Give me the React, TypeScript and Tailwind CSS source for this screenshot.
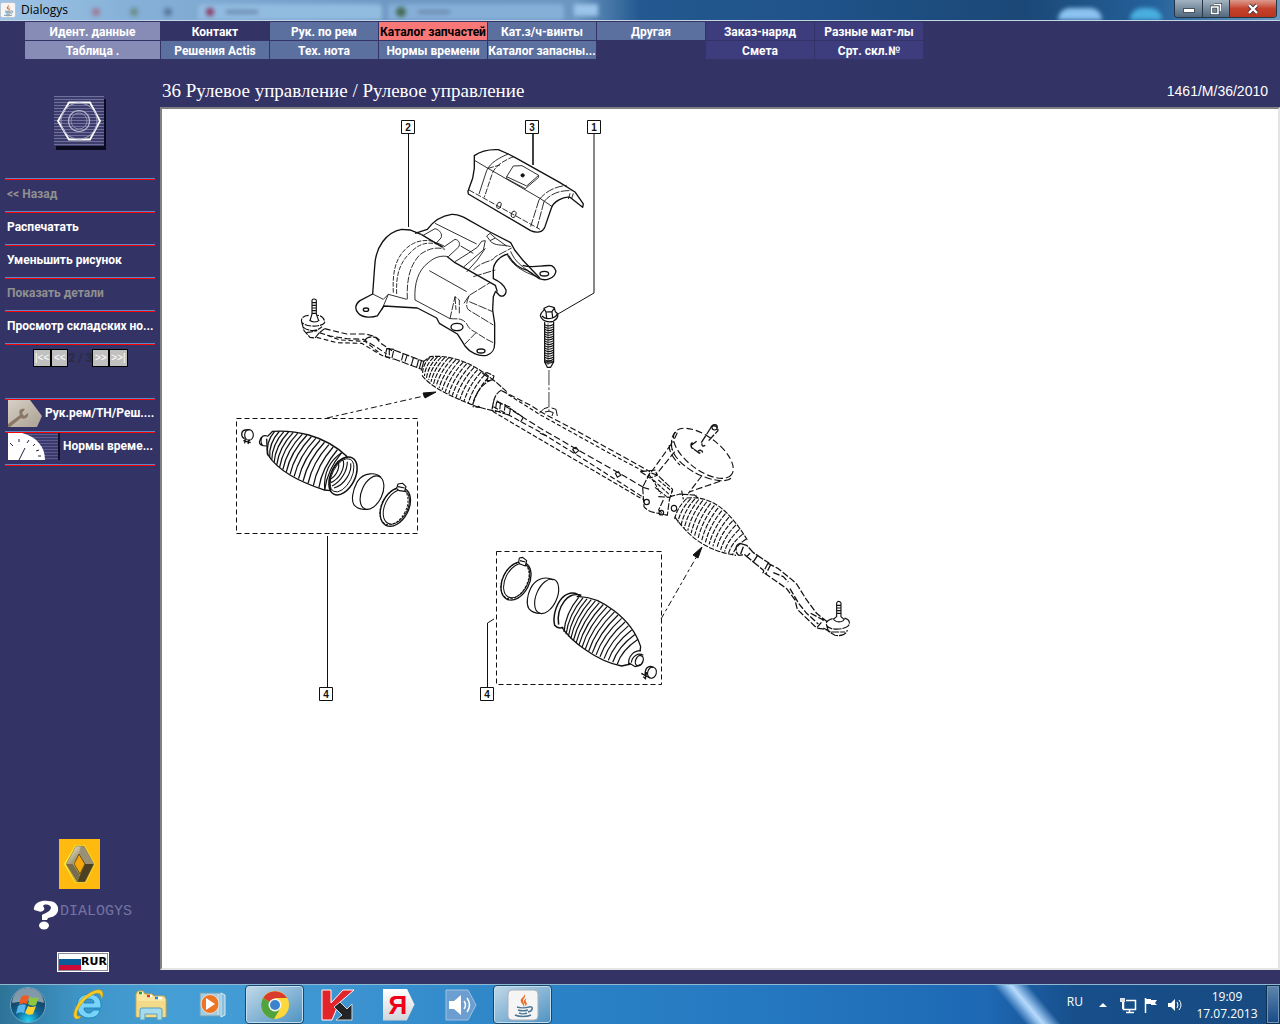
import type { ReactNode } from 'react';

type Pt = [number, number];

const quad = (a: Pt, b: Pt, c: Pt, t: number): Pt => [
  (1 - t) * (1 - t) * a[0] + 2 * t * (1 - t) * b[0] + t * t * c[0],
  (1 - t) * (1 - t) * a[1] + 2 * t * (1 - t) * b[1] + t * t * c[1],
];

/** Curved ribs spread between the upper and the lower edge of a bellows. */
function Ribs({ top, bottom, count, bulge, dash, width = 3 }: {
  top: [Pt, Pt, Pt]; bottom: [Pt, Pt, Pt]; count: number; bulge: number; dash?: string; width?: number;
}) {
  const d: string[] = [];
  for (let i = 0; i < count; i++) {
    const t = i / (count - 1);
    const p = quad(...top, t);
    const q = quad(...bottom, t);
    const cx = (p[0] + q[0]) / 2 - bulge;
    const cy = (p[1] + q[1]) / 2 - bulge * 0.2;
    d.push(`M${p[0].toFixed(1)} ${p[1].toFixed(1)}Q${cx.toFixed(1)} ${cy.toFixed(1)} ${q[0].toFixed(1)} ${q[1].toFixed(1)}`);
  }
  return <path d={d.join('')} strokeWidth={width} strokeDasharray={dash} />;
}

function Callout({ x, y, n }: { x: number; y: number; n: string }) {
  return (
    <g>
      <rect x={x - 6.5} y={y - 6.5} width="13" height="13" fill="#fff" stroke="#111" />
      <text x={x} y={y + 3.5} textAnchor="middle" fill="#111" stroke="none" fontSize="10" fontWeight="700" fontFamily="Liberation Sans, sans-serif">{n}</text>
    </g>
  );
}

function Shields() {
  return (
    <g transform="translate(340 110) scale(.3333)">
      {/* large heat shield */}
      <g strokeWidth="4">
        <path d="M245 374 L210 360 L185 358 C140 366 106 410 104 470 L98 552 L60 572 C44 584 44 598 55 610 C70 626 100 622 112 618 L132 588 L232 594 L290 624 L298 640 L352 672 L375 708 C390 728 415 740 440 736 C458 730 464 720 464 700 L464 640 L458 600 L460 560 L466 545" />
        <path d="M225 370 L262 358 C275 340 300 318 335 313 C352 312 362 318 372 322 L450 366 L512 398 L524 420 L548 450 L600 505" />
        <path d="M548 466 C580 476 605 464 635 467 C650 476 650 486 643 496 C634 508 615 513 598 506 L560 480 C535 475 520 462 505 436" />
        <path d="M505 432 C480 436 460 460 460 480 L460 506 C478 514 492 524 498 540 C500 556 488 562 478 556 L466 543" />
        <path d="M245 374 L308 412 M322 440 L345 458 L466 526 L472 545" />
        <ellipse cx="78" cy="599" rx="8" ry="5" /><ellipse cx="351" cy="651" rx="18" ry="11" /><ellipse cx="423" cy="723" rx="12" ry="6" /><ellipse cx="613" cy="491" rx="13" ry="7" />
      </g>
      <g strokeWidth="2.6">
        <path d="M98 552 L130 568 L145 553 L200 568 M145 553 L125 600" />
        <path d="M160 548 C158 500 160 450 200 414 C225 392 255 388 280 394 L308 410" strokeDasharray="14 4" />
        <path d="M170 552 C168 500 175 460 215 424 C240 400 262 396 290 402" strokeDasharray="14 4" />
        <path d="M202 568 C200 520 205 470 240 434 C265 415 290 410 315 418" strokeDasharray="20 4" />
        <path d="M225 570 C222 520 235 480 265 458 C285 440 305 436 325 440" />
        <path d="M268 482 L380 545 M225 570 L330 626 M250 376 L285 356 C300 360 308 372 303 384 L290 398 M285 340 L410 402 M310 412 L345 388 C358 390 362 402 355 412 L325 440 M362 408 L400 430" />
        <path d="M290 398 L312 408 M345 455 L385 430 L412 412 L425 394 L436 392 L430 420 L372 470 M436 415 L412 450 L380 486 M440 378 L450 370 L466 384 L450 392 Z M466 384 L500 408 M450 392 C465 410 485 402 512 410" />
        <path d="M330 626 L345 560 L358 570 L358 610 M345 560 L348 600 M330 626 C350 628 370 620 385 650 C395 664 405 664 408 668 L440 688 M408 668 L375 702 M440 688 L464 700" strokeDasharray="22 4" />
        <path d="M372 580 L388 556 L450 518 M388 556 C380 575 376 590 386 600 L460 645 M388 575 L458 605 M400 480 C430 450 455 458 466 440 L515 414 M400 500 L466 480" strokeDasharray="26 4" />
        <path d="M500 432 C515 460 535 480 590 500 M512 424 C525 455 545 470 580 492" />
      </g>
      {/* small heat shield */}
      <g strokeWidth="4">
        <path d="M403 137 C420 125 440 117 475 119 L505 132 L530 145 L660 218 L705 246 L730 282 L728 292 L690 262 C670 258 640 276 635 292 L615 350 C608 368 590 370 572 362 L385 252 L384 244 L398 205 L403 175 Z" />
      </g>
      <g strokeWidth="2.6">
        <path d="M405 152 L444 175 L600 265 L637 290 M505 132 C480 142 450 158 440 182 L417 252" />
        <path d="M522 140 C496 148 465 168 457 190 L433 262 M444 175 L480 165" strokeDasharray="18 4" />
        <path d="M597 270 C615 245 645 230 680 226 M612 275 C630 252 660 240 694 242 M597 270 L572 350 M612 275 L591 354" strokeDasharray="26 4" />
        <path d="M387 240 L600 358 M690 250 L685 268 M700 250 L695 266" strokeDasharray="18 5" />
        <path d="M500 200 L520 168 L546 167 L596 196 L560 228 Z M500 200 L500 206 L556 236 L596 202 V196" />
        <ellipse cx="477" cy="286" rx="6" ry="10" transform="rotate(20 477 286)" /><ellipse cx="521" cy="313" rx="7" ry="10" transform="rotate(20 521 313)" />
        <circle cx="548" cy="196" r="5" fill="#111" />
      </g>
      {/* bolt */}
      <g strokeWidth="3.6">
        <path d="M601 617 C602 606 612 602 612 600 L612 595 L627 588 L643 593 L646 605 C658 612 656 624 640 634 C625 638 606 634 601 617 Z M612 595 L618 606 L636 605 L643 594 M618 606 L620 624 M636 605 L638 622 M606 618 C615 630 645 628 652 612" />
        <path d="M614 636 L614 756 L622 772 L632 772 L641 756 L641 636 M614 756 L641 756" />
        <path d="M624 640 V765" strokeWidth="2" />
        {Array.from({ length: 17 }, (_, i) => <path key={i} d={`M614 ${644 + i * 7} Q628 ${652 + i * 7} 641 ${643 + i * 7}`} strokeWidth="3.4" />)}
      </g>
    </g>
  );
}

function LeftSide() {
  return (
    <g transform="translate(230 290) scale(.3333)">
      {/* ball joint and tie rod */}
      <g strokeWidth="3.4">
        <path d="M246 30 V72 L240 92 M259 30 V72 L266 92 M246 30 Q252 24 259 30 M246 38 h13 M246 46 h13 M246 54 h13 M246 62 h13 M246 70 h13 M238 90 C245 98 262 98 268 90" />
        <path d="M236 76 C220 76 212 86 215 96 C225 112 275 112 284 98 C284 86 275 76 262 76 M215 96 L222 122 L240 142 L255 144 L268 128 L284 116 M220 112 C235 124 260 126 276 110 M230 128 L262 122" strokeDasharray="20 3" />
        <path d="M284 116 L350 132 L408 132 L436 140 L452 160 L486 182 M268 128 L300 138 L350 146 L400 148 L440 172 L470 192" strokeDasharray="18 8" />
        <path d="M260 142 L320 158 L395 160 L425 178 L455 196 L490 208 M292 136 L330 150 L405 154 L445 186" strokeDasharray="14 8" />
        <path d="M405 150 C415 136 440 138 450 152 M470 176 L492 178 L486 204 L466 200 Z M478 174 V205 M492 180 L580 214 M490 206 L575 238 M520 190 L514 214 M532 194 L524 218 M550 204 L544 226" strokeDasharray="22 5" />
        <path d="M566 208 L560 232 M575 210 L568 236 M582 212 L574 242" />
      </g>
      {/* bellows in place */}
      <g strokeWidth="3.4">
        <Ribs top={[[600, 202], [690, 192], [775, 262]]} bottom={[[578, 252], [620, 300], [728, 346]]} count={17} bulge={12} dash="15 4" width={3.4} />
        <path d="M580 215 L600 200 C660 194 720 215 780 262 M576 256 C610 300 680 325 745 352" strokeDasharray="16 4" />
        <path d="M758 250 L775 262 L770 272 L788 270 L792 258 L772 248 Z M745 348 L750 352 L728 350 M790 268 C760 275 735 310 728 345 M780 262 L800 278 L830 305 M748 352 L800 365 M815 300 C795 310 790 330 786 362 M800 335 L842 352 L838 376 L796 362 Z M812 338 L808 368 M826 342 L822 372 M792 330 L786 358 M842 356 L880 382 L872 396" strokeDasharray="20 4" />
      </g>
      {/* mount under the bolt */}
      <path d="M928 370 L942 356 L955 352 M965 354 L978 358 L982 378 M945 366 Q958 360 970 368 L966 378" strokeWidth="3" />
      <path d="M957 240 V365" strokeWidth="2.4" strokeDasharray="46 6 8 6" />
      {/* boot kit */}
      <g strokeWidth="3.4">
        <path d="M112 440 L128 424 C190 420 280 432 352 500 M110 446 L112 492 C145 545 210 575 282 600 L304 602" strokeWidth="4" />
        <Ribs top={[[134, 424], [240, 420], [335, 488]]} bottom={[[114, 496], [150, 550], [284, 600]]} count={16} bulge={18} width={3.8} />
        <path d="M112 438 C102 434 90 440 88 456 C88 466 96 468 110 468 M98 438 C92 448 92 460 98 467" />
        <path d="M335 488 C300 510 280 550 284 600 M352 500 C310 510 292 560 302 602" />
        <ellipse cx="339" cy="558" rx="36" ry="61" transform="rotate(27 339 558)" strokeWidth="4.5" />
        <ellipse cx="336" cy="556" rx="29" ry="54" transform="rotate(27 336 556)" strokeWidth="2.6" />
        <path d="M352 515 C352 540 335 575 306 588 M340 512 C345 535 328 568 302 578 M362 520 C366 545 345 585 312 594 M325 518 C330 535 318 560 300 568" />
        <ellipse cx="426" cy="608" rx="31" ry="53" transform="rotate(24 426 608)" />
        <path d="M453 562 C440 548 402 544 382 575 C366 604 364 632 372 645 C382 656 398 660 412 658" />
        <ellipse cx="496" cy="651" rx="40" ry="62" transform="rotate(27 496 651)" strokeWidth="4" />
        <ellipse cx="499" cy="651" rx="34" ry="55" transform="rotate(27 499 651)" strokeWidth="3" />
        <ellipse cx="492" cy="650" rx="37" ry="58" transform="rotate(27 492 650)" strokeWidth="3" strokeDasharray="7 4" />
        <path d="M500 596 L504 582 L518 580 L528 590 L524 604 L508 602 Z M504 590 L524 594" fill="#fff" />
        <ellipse cx="57" cy="435" rx="13" ry="16" /><path d="M44 446 C32 442 32 422 46 420 L58 419 M40 452 L62 458 M46 446 L44 460 M58 448 L54 462" strokeWidth="4" />
      </g>
    </g>
  );
}

function RightSide() {
  return (
    <g transform="translate(540 400) scale(.3333)">
      {/* rack tube */}
      <g strokeWidth="3.4">
        <path d="M-115 -28 L-30 15 L10 40 L120 98 L330 215" strokeDasharray="18 8" />
        <path d="M-95 -16 L0 44 L200 155 L318 218" strokeDasharray="12 7" />
        <path d="M-130 2 L0 84 L100 142 L230 215 L310 262" strokeDasharray="20 9" />
        <path d="M-140 20 L0 96 L100 158 L310 292" strokeDasharray="16 8" />
        <path d="M-142 34 L0 118 L120 188 L308 298" strokeDasharray="14 6" />
        <path d="M98 148 L108 142 L116 152 L106 160 Z M226 220 L236 215 L242 226 L232 232 Z M0 100 L20 108" />
        {/* gear housing */}
        <path d="M330 218 L308 262 L312 320 C325 338 350 338 382 346 L388 300 L398 268 L352 225 Z M308 262 L330 268 M355 290 L390 292 M370 300 L356 330 L372 344 M302 215 L345 210 L352 226 L330 234 Z" strokeDasharray="20 5" />
        <circle cx="320" cy="306" r="8" /><ellipse cx="402" cy="325" rx="8" ry="9" /><circle cx="364" cy="338" r="7" />
        <path d="M340 240 L395 290 M355 240 L398 276 M345 262 L380 290 M326 222 L346 252 L362 282" strokeDasharray="12 5" />
        {/* steering input */}
        <ellipse cx="490" cy="160" rx="106" ry="50" transform="rotate(37 490 160)" strokeDasharray="20 9" />
        <path d="M394 130 C392 180 470 235 540 242 C560 243 575 238 576 228 M388 135 C386 155 400 175 420 195" strokeDasharray="22 8" />
        <path d="M408 96 C396 104 392 120 396 150 M394 132 L334 216 M404 155 L350 222 M540 244 L450 275 M485 228 L445 280 M412 98 L398 128" strokeDasharray="20 8" />
        <path d="M484 128 L512 84 M506 122 L534 92 M512 84 C514 74 534 74 534 92 M486 130 Q484 142 496 136 M458 128 C450 130 452 146 462 146 M462 148 L478 160 L488 152 M454 136 L470 124 M474 154 Q484 146 488 158" strokeDasharray="24 5" strokeWidth="4" />
        <circle cx="524" cy="82" r="8" />
        {/* bellows in place */}
        <Ribs top={[[440, 296], [540, 290], [618, 418]]} bottom={[[404, 358], [480, 430], [578, 464]]} count={17} bulge={12} dash="15 4" width={3.4} />
        <path d="M440 294 C520 286 570 336 622 420 M404 350 C460 430 520 455 588 466 M390 290 L420 282 L470 286 M425 272 L430 298 M462 284 L474 294" strokeDasharray="16 4" />
        {/* tie rod */}
        <path d="M600 430 C586 434 584 458 596 466 L616 464 M600 430 L620 436 L640 458 L688 490 M610 440 L602 462 M614 464 L640 486 L672 512 M630 460 L620 470 M652 468 L640 486" strokeWidth="4" strokeDasharray="26 4" />
        <path d="M684 490 L668 520 M692 494 L678 522 M684 490 L715 506 L752 536 L770 552 L800 600 L830 640 L865 668 M674 520 L712 546 L740 566 L765 600 L772 628 L830 684 L865 690 M700 518 L730 530 L745 546 M750 566 L776 610 L800 640 L835 672 M812 640 L850 660 L830 684" strokeDasharray="20 6" strokeWidth="3.8" />
        {/* ball joint */}
        <path d="M890 608 V650 L880 658 M903 608 V650 L912 658 M890 608 Q896 600 903 608 M890 616 h13 M890 624 h13 M890 632 h13 M890 640 h13 M880 656 C885 668 908 670 914 656" />
        <path d="M878 656 C850 664 856 680 875 686 C900 690 925 684 928 672 C930 662 922 656 912 654 M860 676 L865 694 L885 706 C905 710 920 702 922 690 M850 684 L872 696 L915 696" strokeDasharray="24 3" />
      </g>
    </g>
  );
}

function LowerKit() {
  return (
    <g transform="translate(480 530) scale(.3333)" strokeWidth="3.4">
      <ellipse cx="108" cy="153" rx="40" ry="61" transform="rotate(27 108 153)" strokeWidth="4" />
      <ellipse cx="110" cy="152" rx="34" ry="55" transform="rotate(27 110 152)" strokeWidth="3" />
      <ellipse cx="105" cy="152" rx="37" ry="58" transform="rotate(27 105 152)" strokeWidth="3" strokeDasharray="7 4" />
      <path d="M116 96 L118 84 L128 82 L140 92 L136 108 L120 102 Z M120 92 L136 96" fill="#fff" />
      <ellipse cx="200" cy="199" rx="31" ry="55" transform="rotate(24 200 199)" />
      <path d="M220 150 C195 136 165 148 152 175 C142 195 138 220 146 235 C154 246 170 250 182 250" />
      <path d="M300 200 C290 186 268 184 248 202 C226 226 218 262 224 286 C232 296 244 294 250 292 M304 196 C285 190 268 196 254 212 C236 236 232 262 236 284" strokeWidth="4.5" />
      <path d="M290 200 C360 196 456 266 482 350 L480 364 M246 292 C270 330 350 395 425 408 L452 402" strokeWidth="4" />
      <Ribs top={[[296, 202], [400, 210], [474, 328]]} bottom={[[252, 306], [300, 360], [412, 402]]} count={17} bulge={18} width={3.6} />
      <path d="M482 362 C460 362 444 380 446 402 M490 376 C474 366 456 380 454 398 M446 398 L466 410 L482 404" />
      <ellipse cx="478" cy="392" rx="11" ry="16" transform="rotate(24 478 392)" strokeWidth="4" />
      <ellipse cx="516" cy="428" rx="13" ry="17" transform="rotate(15 516 428)" />
      <path d="M520 412 C504 404 494 416 496 436 M484 430 L510 444 M490 440 L498 448 M500 426 L496 444" strokeWidth="4" />
    </g>
  );
}

function PartsDrawing() {
  return (
    <svg width="700" height="600" viewBox="162 109 700 600" fill="none" stroke="#111" strokeLinecap="butt" strokeLinejoin="round" role="img" aria-label="Рулевое управление" className="block max-w-full">
      <path d="M408.500 133 V227 M594 133 V293 L558 314" strokeWidth="1" />
      <path d="M533 133 V165" strokeWidth="1.600" />
      <path d="M327.500 536 V688 M487.500 688 V623 L494 619" strokeWidth="1" />
      <g strokeDasharray="5 3" strokeWidth="1">
        <rect x="236.500" y="418.500" width="181" height="115" />
        <rect x="496.500" y="551.500" width="165" height="133" />
      </g>
      <path d="M327 418 L424 396 M661 619 L697 556" strokeDasharray="6 3 3 3" />
      <path d="M436 392 L423 393 L425 398 Z M702 547 L693 555 L698 558 Z" fill="#111" />
      <Shields />
      <LeftSide />
      <RightSide />
      <LowerKit />
      <Callout x={408} y={127} n="2" />
      <Callout x={532} y={127} n="3" />
      <Callout x={594} y={127} n="1" />
      <Callout x={326} y={694} n="4" />
      <Callout x={487} y={694} n="4" />
    </svg>
  );
}

const JavaCup = ({ className }: { className: string }) => (
  <svg viewBox="0 0 32 32" className={className} aria-hidden="true">
    <rect x="1" y="1" width="30" height="30" rx="4" fill="#f5f5f6" stroke="#a9b0b8" />
    <path d="M17 4c3 3-5 5-3 9 1 2 3 3 2 5 3-3 0-4 0-6 0-3 4-4 1-8zM20 9c-4 2-4 4-2 6 1 1 0 2-1 3 4-2 3-4 2-5-1-2 0-3 1-4z" fill="#e8702a" />
    <path d="M10 18c3 1 9 1 12 0M11 21c3 1 7 1 10 0M12 24c2 1 6 1 8 0M8 26c4 2 12 2 16 0M22 18c5-1 4 4-1 5" fill="none" stroke="#4d7896" strokeWidth="1.500" />
  </svg>
);

const menu: { label: string; tone: string }[][] = [
  [
    { label: 'Идент. данные', tone: 'bg-[#868cb6] text-white' },
    { label: 'Контакт', tone: 'bg-[#333366] text-white' },
    { label: 'Рук. по рем', tone: 'bg-[#5c70a0] text-white' },
    { label: 'Каталог запчастей', tone: 'bg-[#f87878] text-black' },
    { label: 'Кат.з/ч-винты', tone: 'bg-[#5c70a0] text-white' },
    { label: 'Другая', tone: 'bg-[#5c70a0] text-white' },
    { label: 'Заказ-наряд', tone: 'bg-[#3d3d7d] text-white' },
    { label: 'Разные мат-лы', tone: 'bg-[#3d3d7d] text-white' },
  ],
  [
    { label: 'Таблица .', tone: 'bg-[#868cb6] text-white' },
    { label: 'Решения Actis', tone: 'bg-[#5c70a0] text-white' },
    { label: 'Тех. нота', tone: 'bg-[#5c70a0] text-white' },
    { label: 'Нормы времени', tone: 'bg-[#5c70a0] text-white' },
    { label: 'Каталог запасны...', tone: 'bg-[#5c70a0] text-white' },
    { label: '', tone: '' },
    { label: 'Смета', tone: 'bg-[#3d3d7d] text-white' },
    { label: 'Срт. скл.№', tone: 'bg-[#3d3d7d] text-white' },
  ],
];

const actions = [
  { label: '<< Назад', disabled: true },
  { label: 'Распечатать', disabled: false },
  { label: 'Уменьшить рисунок', disabled: false },
  { label: 'Показать детали', disabled: true },
  { label: 'Просмотр складских но...', disabled: false },
];

function Rule() {
  return <div className="h-0.5 border-t border-[#5f86c4] bg-[#ff0000]" />;
}

function PagerButton({ children }: { children: string }) {
  return <button type="button" className="h-[18px] min-w-[17px] border border-black bg-[#c0c0c0] px-px font-['Liberation_Sans',sans-serif] text-[10px] leading-4 font-normal text-white">{children}</button>;
}

function Sidebar() {
  return (
    <aside className="flex w-40 shrink-0 flex-col px-[5px] pb-3">
      <svg viewBox="0 0 52 54" className="mt-[37px] ml-[49px] h-[54px] w-[52px]" aria-hidden="true">
        <rect x="2" y="3" width="50" height="51" fill="#0b0b20" />
        <rect width="50" height="50" fill="#3d3d6c" />
        <path d={Array.from({ length: 17 }, (_, i) => `M0 ${i * 3 + 0.5}H50`).join('')} stroke="#70709e" />
        <path d="M15 6.500H36L46 25L36 43.500H15L4 25Z" fill="none" stroke="#fff" strokeWidth="1.800" />
        <circle cx="25" cy="25" r="18" fill="none" stroke="#a0a0c0" />
        <circle cx="25" cy="25" r="10.500" fill="none" stroke="#b4b4cc" strokeWidth="1.200" />
        <circle cx="25" cy="25" r="8" fill="none" stroke="#8c8cb0" />
      </svg>
      <nav className="mt-7" aria-label="Действия">
        {actions.map((a) => (
          <div key={a.label}>
            <Rule />
            <button type="button" disabled={a.disabled} className={a.disabled ? 'flex h-[31px] w-full items-center px-0.5 pb-1 text-left whitespace-nowrap text-[#909090]' : 'flex h-[31px] w-full items-center px-0.5 pb-1 text-left whitespace-nowrap text-white'}>{a.label}</button>
          </div>
        ))}
        <Rule />
      </nav>
      <div className="mt-1 ml-7 flex h-[18px] items-center text-[#2b2b3d]">
        <PagerButton>{'|<<'}</PagerButton>
        <PagerButton>{'<<'}</PagerButton>
        <span className="w-6 text-center whitespace-nowrap">2 / 3</span>
        <PagerButton>{'>>'}</PagerButton>
        <PagerButton>{'>>|'}</PagerButton>
      </div>
      <nav className="mt-[31px]" aria-label="Документы">
        <Rule />
        <button type="button" className="flex h-[31px] w-full items-start gap-[3px] pl-[3px] text-white">
          <svg viewBox="0 0 34 27" className="h-[27px] w-[34px] shrink-0" aria-hidden="true">
            <defs><linearGradient id="paper" x2="1" y2="1"><stop stopColor="#d8d0c6" /><stop offset="1" stopColor="#aaa093" /></linearGradient></defs>
            <path d="M0 0H22L34 16L29 27H0Z" fill="url(#paper)" />
            <path d="M0 24L12 15C10 10 13 8 17 9L14 13L16 16L20 13C21 17 17 20 13 18L2 27H0Z" fill="#8a7766" />
          </svg>
          <span className="pt-1 whitespace-nowrap">Рук.рем/ТН/Реш....</span>
        </button>
        <Rule />
        <button type="button" className="flex h-[31px] w-full items-start gap-[3px] pl-[3px] text-white">
          <svg viewBox="0 0 52 27" className="h-[27px] w-[52px] shrink-0" aria-hidden="true">
            <rect width="52" height="27" fill="#11112d" /><rect width="50" height="27" fill="#3a3a6c" />
            <path d="M0 1.500H50M0 4.500H50M0 7.500H50M0 10.500H50M0 13.500H50M0 16.500H50M0 19.500H50M0 22.500H50M0 25.500H50" stroke="#5c5c90" />
            <path d="M0 0H14C29 4 37 14 37 27H0Z" fill="#fff" />
            <path d="M17 15L11 27M2 10L5 13M11 6V9M21 7L19 10M27 11L25 13M31 17L28 18M33 23H30" stroke="#22223c" />
          </svg>
          <span className="pt-1 whitespace-nowrap">Нормы време...</span>
        </button>
        <Rule />
      </nav>
      <div className="mt-auto flex flex-col">
        <svg viewBox="0 0 41 50" className="ml-[54px] h-[50px] w-[41px]" aria-label="Renault" role="img">
          <defs><linearGradient id="steel" x2="1" y2="1"><stop stopColor="#fffbe8" /><stop offset=".5" stopColor="#b8ae90" /><stop offset="1" stopColor="#6a5c3a" /></linearGradient></defs>
          <rect width="41" height="50" fill="#ffba10" />
          <path d="M17 7H25L35 25L26 43H17L6 25Z" fill="#fff03a" stroke="#fff03a" strokeWidth="2" />
          <path d="M17 7H25L21 14L14 25H7Z" fill="url(#steel)" />
          <path d="M25 7L35 25H26L20 14L22 7Z" fill="#9a9078" />
          <path d="M7 25H14L21 36L18 43Z" fill="#786c50" />
          <path d="M35 25H26L21 36L18 43H26Z" fill="#4c4022" />
          <path d="M20 15L26 25L21 35L15 25Z" fill="#f7a60c" stroke="#3b2f12" strokeWidth=".800" />
          <path d="M17 7H25L35 25L26 43H17L7 25Z" fill="none" stroke="#8a7430" strokeWidth=".600" />
        </svg>
        <div className="mt-[11px] flex w-full items-start pl-7 text-[#7474a2]">
          <svg viewBox="0 0 26 30" className="h-[30px] w-[26px] shrink-0" aria-hidden="true">
            <path d="M1 8C2 2 9 0 15 1C23 1 26 6 25 11C23 17 18 17 15 18L14 20H9V15C12 13 17 12 18 8C18 5 12 3 10 6C14 10 8 13 5 11C2 10 0 10 1 8Z" fill="#fff" />
            <ellipse cx="11" cy="25.500" rx="5" ry="4" fill="#fff" />
          </svg>
          <span className="ml-px pt-0.5 font-['Liberation_Mono',monospace] text-[15px] leading-5 font-normal">DIALOGYS</span>
        </div>
        <button type="button" className="mt-[22px] ml-[52px] flex h-5 w-[52px] items-center border border-white bg-white font-['DejaVu_Sans',sans-serif] text-[11px] font-bold text-black outline-1 -outline-offset-2 outline-[#8c8c98]">
          <span className="ml-px h-4 w-[22px] shrink-0 bg-[linear-gradient(#fff_0_33%,#0b5c98_33%_67%,#cc0c36_67%)]" />
          RUR
        </button>
      </div>
    </aside>
  );
}

function TaskButton({ label, active, children }: { label: string; active?: boolean; children: ReactNode }) {
  return (
    <button type="button" aria-label={label} className={active ? 'flex h-[39px] w-[59px] items-center justify-center rounded-sm border border-[#15486f] bg-linear-to-br from-[#c2d9e8] to-[#4b93c2] shadow-[inset_0_0_0_1px_#c4deef]' : 'flex h-[39px] w-[59px] items-center justify-center'}>
      {children}
    </button>
  );
}

function Taskbar() {
  return (
    <footer className="flex h-10 items-center border-t border-[#8db8d0] bg-[linear-gradient(90deg,#2d7397_0,#3f94c6_6%,#459fd6_14%,#3c93d0_28%,#2c83c6_42%,#2478c0_60%,#1e68b4_77%,#174f8b_84%,#174a80_100%)] font-normal text-white">
      <TaskButton label="Пуск">
        <svg viewBox="0 0 38 38" className="mr-1 h-[38px] w-[38px]">
          <defs><radialGradient id="orb" cx=".5" cy=".95" r=".8"><stop stopColor="#25d4f5" /><stop offset=".45" stopColor="#126594" /><stop offset="1" stopColor="#153851" /></radialGradient></defs>
          <circle cx="19" cy="19" r="17.500" fill="url(#orb)" stroke="#70a6c0" />
          <path d="M3 17C4-3 34-3 35 17C24 13 14 15 3 17Z" fill="#c9d9e2" opacity=".6" />
          <g transform="translate(2)"><path d="M10 11Q14 8 18 10L16 18Q12 16 8 19Z" fill="#ee5a24" /><path d="M19 11Q23 13 28 11L25 19Q21 21 17 18Z" fill="#8dc63f" /><path d="M7 20Q11 17 15 19L13 27Q9 25 5 28Z" fill="#59b7ef" /><path d="M17 20Q20 22 25 20L22 28Q18 30 14 27Z" fill="#ffd231" /></g>
        </svg>
      </TaskButton>
      <div className="flex flex-1 items-center gap-[3px]">
        <TaskButton label="Internet Explorer">
          <svg viewBox="0 0 34 34" className="h-[34px] w-[34px]">
            <path d="M17 6C9 6 5 11 5 18C5 25 10 30 17 30C23 30 27 27 28 22H21C20 24 19 25 17 25C14 25 12 23 12 20H29C30 11 25 6 17 6ZM12 15C13 12 14 11 17 11C20 11 22 12 22 15Z" fill="#79d3f8" stroke="#168ac3" fillRule="evenodd" />
            <path d="M5 31C-2 31 3 16 12 9C21 1 31-1 31 6C31 8 30 10 29 11C30 6 27 3 20 7C11 12 4 22 5 27C5 29 7 28 9 28C8 30 7 31 5 31Z" fill="#f7cb25" stroke="#b98a12" strokeWidth=".500" />
          </svg>
        </TaskButton>
        <TaskButton label="Проводник">
          <svg viewBox="0 0 34 32" className="h-8 w-[34px]">
            <path d="M2 28V5L4 2H9L11 5H18L20 7H30L32 10V28Z" fill="#f8e6a0" stroke="#c6a34b" />
            <path d="M5 4H9M13 7H18M21 9H28" stroke="#fff" strokeWidth="2.500" />
            <path d="M5 4H8" stroke="#27a127" strokeWidth="2.500" /><path d="M13 7H16" stroke="#d63c20" strokeWidth="2.500" /><path d="M21 9H24" stroke="#2287e0" strokeWidth="2.500" />
            <path d="M3 12H31V28H3Z" fill="#f3da88" />
            <path d="M6 31V21Q6 19 8 19H26Q28 19 28 21V31H23V25H11V31Z" fill="#a5dbee" stroke="#579fc0" />
          </svg>
        </TaskButton>
        <TaskButton label="Проигрыватель">
          <svg viewBox="0 0 28 28" className="h-7 w-7"><path d="M1 2H22V25H1Z" fill="#a5cbdd" stroke="#6ba2bd" /><path d="M22 2L26 4V24L22 26ZM19 3V24" fill="#8bc0dc" stroke="#d2edf8" /><ellipse cx="11" cy="13" rx="9" ry="9.500" fill="#ee7523" stroke="#dce6ea" /><path d="M7 7L16 13L7 19Z" fill="#fff" /></svg>
        </TaskButton>
        <TaskButton label="Google Chrome" active>
          <svg viewBox="0 0 30 30" className="h-[30px] w-[30px]"><circle cx="15" cy="15" r="14" fill="#ffd93c" /><path d="M15 15L3 8A14 14 0 0 1 27 8H15Z" fill="#d93b2c" /><path d="M15 15L3 8A14 14 0 0 0 14 29L20 19Z" fill="#51a43d" /><circle cx="15" cy="15" r="6.500" fill="#f4f4f4" /><circle cx="15" cy="15" r="5" fill="#3c83cc" /></svg>
        </TaskButton>
        <TaskButton label="Kaspersky">
          <svg viewBox="0 0 34 34" className="h-[34px] w-[34px]"><path d="M2 2H11V15L23 2H34L19 15L12 32H2Z" fill="#e2252b" stroke="#fff" /><path d="M14 19L20 14L27 21L32 16V32H16L22 27Z" fill="#242426" stroke="#d5d5d5" /></svg>
        </TaskButton>
        <TaskButton label="Яндекс">
          <span className="flex h-8 w-8 items-center justify-start bg-linear-to-b from-white to-[#d0d4d8] pl-1.5 font-['Liberation_Sans',sans-serif] text-[26px] leading-none font-bold text-[#f00018] [clip-path:polygon(0_0,76%_0,100%_50%,76%_100%,0_100%)]">Я</span>
        </TaskButton>
        <TaskButton label="Громкость">
          <svg viewBox="0 0 32 32" className="h-8 w-8"><path d="M1 1H23L31 16L23 31H1Z" fill="#6c9ed1" stroke="#9ec1e1" /><path d="M4 12H9L16 6V26L9 20H4Z" fill="#fff" /><path d="M19 12Q22 16 19 20M22 9Q27 16 22 23" fill="none" stroke="#fff" strokeWidth="1.500" /></svg>
        </TaskButton>
        <TaskButton label="Dialogys" active><JavaCup className="h-8 w-8" /></TaskButton>
      </div>
      <div className="h-full w-20 bg-[linear-gradient(50deg,transparent_34%,#93c2ef_46%,#b8dafa_50%,#8dbae8_54%,transparent_66%)]" />
      <div className="flex h-full items-center font-['Open_Sans','Noto_Sans',sans-serif] text-[12px]">
        <span className="mr-4 -mt-1.5">RU</span>
        <svg viewBox="0 0 88 20" className="h-5 w-[88px]" aria-hidden="true">
          <path d="M0 12L4 8L8 12Z" fill="#fff" />
          <path d="M24.500 7V14.500H36.500V5.500H27M30.500 14V17.500M27 17.500H35" fill="none" stroke="#fff" strokeWidth="1.500" /><path d="M21 3H26V7H21Z" fill="#d9e3ed" /><path d="M23.500 7V14" stroke="#fff" />
          <path d="M46.500 3V18" stroke="#fff" strokeWidth="1.500" /><path d="M47 4H52V5H58L56 8L58 10H52V9H47Z" fill="#fff" />
          <path d="M69 8H72L76 4V16L72 12H69Z" fill="#fff" /><path d="M78 7Q80 10 78 13M80 5Q84 10 80 15" fill="none" stroke="#fff" />
        </svg>
        <div className="mr-[7px] ml-2 w-16 text-center leading-[17px]"><div>19:09</div><div>17.07.2013</div></div>
        <button type="button" aria-label="Показать рабочий стол" className="h-full w-3.5 border border-[#0e2e52] bg-linear-to-b from-[#5f86ac] to-[#174a86] shadow-[inset_0_0_0_1px_#6e94ba]" />
      </div>
    </footer>
  );
}

export default function App() {
  return (
    <div className="flex min-h-screen flex-col bg-[#333366] font-['Roboto','Liberation_Sans',sans-serif] text-[12px] font-bold">
      <header className="flex h-[21px] items-center overflow-hidden border-b border-[#c3d4e2] bg-[linear-gradient(90deg,#9fc4e6_0,#86b1d8_10%,#6f99c4_30%,#6c96c0_45%,#235990_50%,#1f5288_65%,#1b4876_80%,#24619a_90%,#6c99c0_100%)] font-['Open_Sans','Noto_Sans',sans-serif] font-normal text-black">
        <JavaCup className="h-4 w-4" />
        <h1 className="ml-[5px]">Dialogys</h1>
        <div className="flex flex-1 items-end gap-1.5 self-end pl-6 blur-[2px]" aria-hidden="true">
          <i className="mb-1 h-2 w-2 rounded-full bg-[#a07a96]" /><i className="mr-5 mb-1 ml-6 h-2 w-2 rounded-full bg-[#6c8c86]" /><i className="mr-5 mb-1 h-2 w-2 rounded-full bg-[#56769c]" />
          <span className="flex h-4 w-[184px] items-center gap-3 rounded-t bg-[#92bbe0] pl-2"><i className="h-2 w-2 rounded-full bg-[#8d3b65]" /><i className="h-1 w-8 bg-[#6c8cae]" /></span>
          <span className="flex h-4 w-[176px] items-center gap-3 rounded-t bg-[#86afd8] pl-2"><i className="h-2.5 w-2.5 rounded-full bg-[#446b52]" /><i className="h-1 w-8 bg-[#6c8cae]" /></span>
          <i className="mb-1 ml-1 h-3 w-6 bg-[#9cc4ea]" />
        </div>
        <div className="mr-3 flex items-end gap-7 self-end blur-[2px]" aria-hidden="true">
          <i className="h-3 w-11 rounded-t-full bg-[#8ac2f0]" /><i className="h-3 w-8 rounded-t-full bg-[#49aede]" />
        </div>
        <div className="mr-[3px] flex h-[18px] self-start overflow-hidden rounded-b border border-t-0 border-[#253647] text-white">
          <button type="button" aria-label="Свернуть" className="flex w-7 items-center justify-center border-r border-[#253647] bg-linear-to-b from-[#a4b4c2] to-[#51687e]"><span className="mt-1 h-[5px] w-3 border border-[#4b5560] bg-white" /></button>
          <button type="button" aria-label="Восстановить" className="flex w-[27px] items-center justify-center border-r border-[#253647] bg-linear-to-b from-[#a4b4c2] to-[#51687e]"><svg viewBox="0 0 12 12" className="h-3 w-3"><path d="M4 1.500H10.500V8M1.500 4H8V10.500H1.500Z" fill="none" stroke="#39444f" strokeWidth="3" /><path d="M4 1.500H10.500V8M1.500 4H8V10.500H1.500Z" fill="none" stroke="#fff" strokeWidth="1.600" /></svg></button>
          <button type="button" aria-label="Закрыть" className="flex w-[46px] items-center justify-center bg-linear-to-b from-[#dc9a8e] via-[#c4422c] to-[#b8341d]"><svg viewBox="0 0 12 12" className="h-3 w-3"><path d="M2 2L10 10M10 2L2 10" stroke="#4a3535" strokeWidth="4" /><path d="M2 2L10 10M10 2L2 10" stroke="#fff" strokeWidth="2.400" /></svg></button>
        </div>
      </header>
      <nav className="mt-px ml-[25px] flex flex-col gap-px" aria-label="Разделы">
        {menu.map((row, r) => (
          <div key={r} className="grid grid-cols-[135px_repeat(7,108px)] gap-px">
            {row.map((m, i) => m.label
              ? <button key={i} type="button" className={`h-[18px] text-center leading-5 whitespace-nowrap ${m.tone}`}>{m.label}</button>
              : <span key={i} />)}
          </div>
        ))}
      </nav>
      <div className="flex flex-1">
        <Sidebar />
        <main className="flex min-w-0 flex-1 flex-col pb-3.5">
          <div className="flex h-12 items-end justify-between pr-3 pb-1 pl-0.5 font-normal text-white">
            <h2 className="font-['Liberation_Serif',serif] text-[19px] leading-6">36 Рулевое управление / Рулевое управление</h2>
            <span className="font-['Liberation_Sans',sans-serif] text-[14px] leading-6">1461/М/36/2010</span>
          </div>
          <section className="flex-1 border-2 border-t-[#808080] border-r-[#e4e4e4] border-b-[#e4e4e4] border-l-[#808080] bg-white">
            <PartsDrawing />
          </section>
        </main>
      </div>
      <Taskbar />
    </div>
  );
}
